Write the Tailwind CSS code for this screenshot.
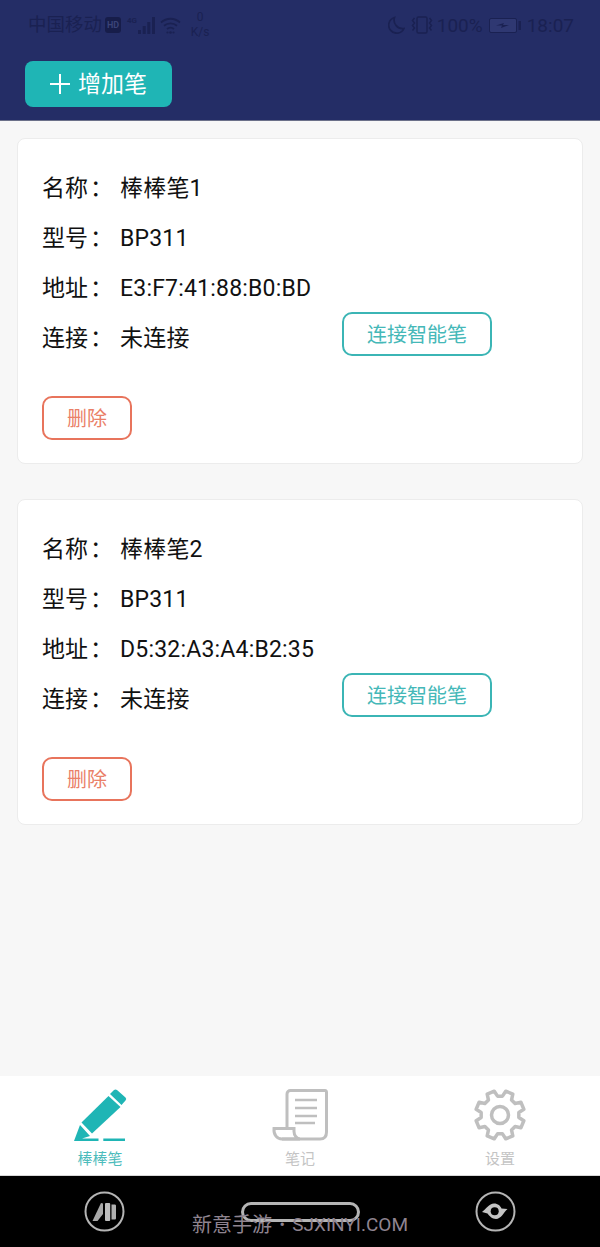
<!DOCTYPE html>
<html lang="zh-CN">
<head>
<meta charset="utf-8">
<script src="https://cdn.jsdelivr.net/npm/@tailwindcss/browser@4"></script>
</head>
<body class="m-0">
<div class="relative flex h-[1247px] w-[600px] flex-col overflow-hidden bg-[#f7f7f7] font-['Roboto','Noto_Sans_CJK_SC',sans-serif]">

  <header class="h-[121px] shrink-0 border-b border-[#6b7089] bg-[#242d66]">
    <div class="flex h-[50px] items-center justify-between pl-[28px] pr-[26px] text-[#1a2152]">
      <div class="flex items-center">
        <span class="text-[18.500px] leading-none">中国移动</span>
        <span class="ml-[3px] flex h-[16px] w-[16px] items-center justify-center rounded-[3px] bg-[#171d4a] text-[9px] font-bold leading-none text-[#3a4378]">HD</span>
        <span class="ml-[6px] mb-[9px] w-[10px] text-[8px] font-bold leading-none">4G</span>
        <svg class="ml-[1px]" width="17" height="17" viewBox="0 0 17 17" fill="#1a2152"><rect x="0" y="13" width="3" height="4"/><rect x="4.700" y="9" width="3" height="8"/><rect x="9.300" y="5" width="3" height="12"/><rect x="14" y="0" width="3" height="17"/></svg>
        <svg class="ml-[5px]" width="21" height="17" viewBox="0 0 21 17" fill="none" stroke="#1a2152" stroke-width="1.800"><path d="M1 5.500c5.500-5 13.500-5 19 0M4 8.800c3.800-3.300 9.200-3.300 13 0M7 12c2-1.600 5-1.600 7 0"/><circle cx="7.500" cy="15.500" r="1.100" fill="#1a2152" stroke="none"/><circle cx="10.500" cy="15.500" r="1.300" fill="#1a2152" stroke="none"/><circle cx="13.500" cy="15.500" r="1.100" fill="#1a2152" stroke="none"/></svg>
        <div class="ml-[9px] flex w-[20px] flex-col items-center text-[12px] leading-[15px]"><span>0</span><span>K/s</span></div>
      </div>
      <div class="flex items-center">
        <svg width="17" height="18" viewBox="0 0 17 18" fill="none" stroke="#1a2152" stroke-width="1.700"><path d="M6.500 1.500a8 8 0 1 0 9.500 11A8.500 8.500 0 0 1 6.500 1.500z"/></svg>
        <svg class="ml-[6px]" width="22" height="18" viewBox="0 0 22 18" fill="none" stroke="#1a2152" stroke-width="1.500"><rect x="6" y="1" width="10" height="16" rx="1.500"/><path d="M3.500 2 1.500 4.500l2 2.500-2 2.500 2 2.500-2 2.500M18.500 2l2 2.500-2 2.500 2 2.500-2 2.500 2 2.500"/></svg>
        <span class="ml-[4px] text-[19px] leading-none">100%</span>
        <svg class="ml-[6px]" width="32" height="15" viewBox="0 0 32 15"><rect x=".5" y=".5" width="27" height="14" rx="1.500" fill="#2f3872" stroke="#1a2152"/><rect x="29.500" y="3" width="2.500" height="9" fill="#1a2152"/><path d="M7 7.500l8-2.500-1 2h6l-8 3 1-2.500z" fill="#1a2152"/></svg>
        <span class="ml-[6px] text-[19px] leading-none">18:07</span>
      </div>
    </div>
    <button class="ml-[25px] mt-[11px] flex h-[46px] w-[147px] items-center rounded-[8px] bg-[#1fb5b5] pl-[25px] text-white">
      <svg width="20" height="20" viewBox="0 0 20 20" stroke="white" stroke-width="2"><path d="M10 0v20M0 10h20"/></svg>
      <span class="ml-[8px] text-[23px] leading-none">增加笔</span>
    </button>
  </header>

  <main class="flex-1 px-[17px] pt-[17px]">
    <section class="mb-[35px] rounded-[8px] border border-[#ececec] bg-white pb-[23px] pl-[24px] pt-[24px]">
      <div class="grid grid-cols-[78px_222px_150px] items-center text-[23px] text-[#111]">
        <div class="flex h-[50px] items-center pt-[2px]">名称<span class="ml-[2px]">：</span></div><div class="col-span-2 pt-[2px] tracking-[0.2px]">棒棒笔1</div>
        <div class="flex h-[50px] items-center pt-[2px]">型号<span class="ml-[2px]">：</span></div><div class="col-span-2 pt-[2px] tracking-[0.2px]">BP311</div>
        <div class="flex h-[50px] items-center pt-[2px]">地址<span class="ml-[2px]">：</span></div><div class="col-span-2 pt-[2px] tracking-[0.2px]">E3:F7:41:88:B0:BD</div>
        <div class="flex h-[50px] items-center pt-[2px]">连接<span class="ml-[2px]">：</span></div><div class="pt-[2px] tracking-[0.2px]">未连接</div>
        <button class="-mt-[1px] mb-[7px] flex h-[44px] items-center justify-center rounded-[10px] border-2 border-[#3bb5b5] pt-[2px] text-[20px] text-[#45b8b8]">连接智能笔</button>
      </div>
      <button class="mt-[33px] flex h-[44px] w-[90px] items-center justify-center rounded-[10px] border-2 border-[#e8745c] pt-[2px] text-[20px] text-[#ea8068]">删除</button>
    </section>
    <section class="rounded-[8px] border border-[#ececec] bg-white pb-[23px] pl-[24px] pt-[24px]">
      <div class="grid grid-cols-[78px_222px_150px] items-center text-[23px] text-[#111]">
        <div class="flex h-[50px] items-center pt-[2px]">名称<span class="ml-[2px]">：</span></div><div class="col-span-2 pt-[2px] tracking-[0.2px]">棒棒笔2</div>
        <div class="flex h-[50px] items-center pt-[2px]">型号<span class="ml-[2px]">：</span></div><div class="col-span-2 pt-[2px] tracking-[0.2px]">BP311</div>
        <div class="flex h-[50px] items-center pt-[2px]">地址<span class="ml-[2px]">：</span></div><div class="col-span-2 pt-[2px] tracking-[0.2px]">D5:32:A3:A4:B2:35</div>
        <div class="flex h-[50px] items-center pt-[2px]">连接<span class="ml-[2px]">：</span></div><div class="pt-[2px] tracking-[0.2px]">未连接</div>
        <button class="-mt-[1px] mb-[7px] flex h-[44px] items-center justify-center rounded-[10px] border-2 border-[#3bb5b5] pt-[2px] text-[20px] text-[#45b8b8]">连接智能笔</button>
      </div>
      <button class="mt-[33px] flex h-[44px] w-[90px] items-center justify-center rounded-[10px] border-2 border-[#e8745c] pt-[2px] text-[20px] text-[#ea8068]">删除</button>
    </section>
  </main>

  <nav class="grid h-[100px] shrink-0 grid-cols-3 border-b border-[#d8d8d8] bg-white pt-[13px]">
    <div class="flex flex-col items-center">
      <svg width="54" height="52" viewBox="-1 0 54 52" fill="#1fb5b5"><path d="M36 5 40 1q1.500-1 3 0l8.500 7.500q1.500 1.500 0 3L47.500 16z"/><path d="M34.500 7 46.500 18 18 44.500 7.500 33.500z"/><path d="M6 36 16 47 8 49.500H24.500V52H0z"/><path d="M29.300 49.500H51V52H29.300z"/></svg>
      <span class="mt-[9px] text-[15px] leading-[18px] text-[#4dbcbc]">棒棒笔</span>
    </div>
    <div class="flex flex-col items-center">
      <svg width="56" height="52" viewBox="0 0 56 52" fill="none" stroke="#bfbfbf" stroke-width="3"><path d="M15 38V5c0-2 1.500-3.500 3.500-3.500H53c1 0 1.500 1 1.500 2V43c0 4.500-2.500 7-6.500 7H10"/><path d="M2 39.500h20v3c0 4 3 7.500 6 7.500H10c-5 0-8.500-4-8-10.500z"/><path d="M23 11h22M23 19h22M23 27h22M23 34h20" stroke-width="2.500"/></svg>
      <span class="mt-[9px] text-[15px] leading-[18px] text-[#c4c4c4]">笔记</span>
    </div>
    <div class="flex flex-col items-center">
      <svg width="52" height="52" viewBox="-26 -26 52 52" fill="none" stroke="#bfbfbf" stroke-width="3.500" stroke-linejoin="round"><polygon points="2.480,-18.840 5.720,-23.820 12.800,-20.890 11.570,-15.070 15.070,-11.570 20.890,-12.800 23.820,-5.720 18.840,-2.480 18.840,2.480 23.820,5.720 20.890,12.800 15.070,11.570 11.570,15.070 12.800,20.890 5.720,23.820 2.480,18.840 -2.480,18.840 -5.720,23.820 -12.800,20.890 -11.570,15.070 -15.070,11.570 -20.890,12.800 -23.820,5.720 -18.840,2.480 -18.840,-2.480 -23.820,-5.720 -20.890,-12.800 -15.070,-11.570 -11.570,-15.070 -12.800,-20.890 -5.720,-23.820 -2.480,-18.840"/><circle r="8.500"/></svg>
      <span class="mt-[9px] text-[15px] leading-[18px] text-[#c4c4c4]">设置</span>
    </div>
  </nav>

  <footer class="flex h-[71px] shrink-0 items-start justify-between bg-black pl-[84px] pr-[84px] pt-[15px]">
    <svg width="41" height="41" viewBox="0 0 41 41"><circle cx="20.500" cy="20.500" r="19" fill="none" stroke="#b5b5b5" stroke-width="2"/><path d="M8.500 30 17 12l2 .5V23l-5.500 7z" fill="#a8a8a8"/><rect x="21" y="12" width="5.200" height="18" rx="1" fill="#bdbdbd"/><path d="M27.500 13.500h3c1 0 1.500.5 1.500 1.500v12c0 1-.5 1.500-1.500 1.500h-3z" fill="#b0b0b0"/></svg>
    <svg width="41" height="41" viewBox="0 0 41 41"><circle cx="20.500" cy="20.500" r="19" fill="none" stroke="#b5b5b5" stroke-width="2"/><path d="M7 21C11 18 14 12.500 19 12.500C23 12.500 25.500 15 26.500 17.500L32.500 18C29 21 26 28 21 28C17 28 14.500 25 12.500 22.500Z" fill="#c4c4c4"/><circle cx="19.700" cy="20.300" r="4" fill="#000"/></svg>
  </footer>

  <div class="absolute left-[241px] top-[1202px] h-[20px] w-[119px] rounded-[10px] border-[3px] border-[#b5b5b5]"></div>
  <div class="absolute left-[192px] top-[1213px] flex w-[216px] items-center justify-between whitespace-nowrap leading-[24px] text-[#8f8490]"><span class="text-[20px]">新意手游</span><span class="text-[16px]">•</span><span class="text-[19px]">SJXINYI.COM</span></div>
</div>
</body>
</html>
